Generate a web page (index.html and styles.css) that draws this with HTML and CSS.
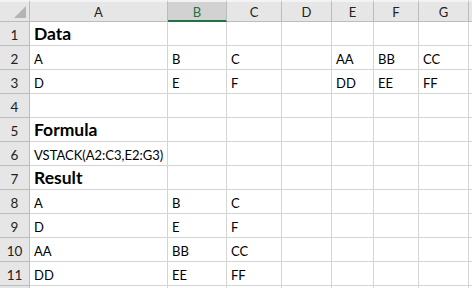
FILE: index.html
```html
<!DOCTYPE html>
<html>
<head>
<meta charset="utf-8">
<link rel="stylesheet" href="styles.css">
</head>
<body>
<div class="sheet">
  <div class="ch corner"><span class="tri"></span></div>
  <div class="ch">A</div>
  <div class="ch sel">B</div>
  <div class="ch">C</div>
  <div class="ch">D</div>
  <div class="ch">E</div>
  <div class="ch">F</div>
  <div class="ch">G</div>
  <div class="ch end"></div>

  <div class="rh">1</div><div class="c title">Data</div><div class="c"></div><div class="c"></div><div class="c"></div><div class="c"></div><div class="c"></div><div class="c"></div><div class="c"></div>
  <div class="rh">2</div><div class="c">A</div><div class="c">B</div><div class="c">C</div><div class="c"></div><div class="c">AA</div><div class="c">BB</div><div class="c">CC</div><div class="c"></div>
  <div class="rh">3</div><div class="c">D</div><div class="c">E</div><div class="c">F</div><div class="c"></div><div class="c">DD</div><div class="c">EE</div><div class="c">FF</div><div class="c"></div>
  <div class="rh">4</div><div class="c"></div><div class="c"></div><div class="c"></div><div class="c"></div><div class="c"></div><div class="c"></div><div class="c"></div><div class="c"></div>
  <div class="rh">5</div><div class="c title">Formula</div><div class="c"></div><div class="c"></div><div class="c"></div><div class="c"></div><div class="c"></div><div class="c"></div><div class="c"></div>
  <div class="rh">6</div><div class="c">VSTACK(A2:C3,E2:G3)</div><div class="c"></div><div class="c"></div><div class="c"></div><div class="c"></div><div class="c"></div><div class="c"></div><div class="c"></div>
  <div class="rh">7</div><div class="c title">Result</div><div class="c"></div><div class="c"></div><div class="c"></div><div class="c"></div><div class="c"></div><div class="c"></div><div class="c"></div>
  <div class="rh">8</div><div class="c">A</div><div class="c">B</div><div class="c">C</div><div class="c"></div><div class="c"></div><div class="c"></div><div class="c"></div><div class="c"></div>
  <div class="rh">9</div><div class="c">D</div><div class="c">E</div><div class="c">F</div><div class="c"></div><div class="c"></div><div class="c"></div><div class="c"></div><div class="c"></div>
  <div class="rh">10</div><div class="c">AA</div><div class="c">BB</div><div class="c">CC</div><div class="c"></div><div class="c"></div><div class="c"></div><div class="c"></div><div class="c"></div>
  <div class="rh">11</div><div class="c">DD</div><div class="c">EE</div><div class="c">FF</div><div class="c"></div><div class="c"></div><div class="c"></div><div class="c"></div><div class="c"></div>
  <div class="rh"></div><div class="c"></div><div class="c"></div><div class="c"></div><div class="c"></div><div class="c"></div><div class="c"></div><div class="c"></div><div class="c"></div>
</div>
</body>
</html>
```
FILE: styles.css
```css
html, body {
  margin: 0;
  padding: 0;
  background: #ffffff;
  overflow: hidden;
}
.sheet {
  display: grid;
  grid-template-columns: 30px 138px 59px 55px 50px 42px 45px 50px 1fr;
  grid-template-rows: 22px repeat(12, 24px);
  font-family: "Lato", "Open Sans", sans-serif;
  font-size: 13px;
  color: #000;
  width: 472px;
  height: 288px;
  overflow: hidden;
}
.ch {
  background: #e6e6e6;
  border-right: 1px solid #bcbcbc;
  border-bottom: 1px solid #bcbcbc;
  border-top: 2px solid #f3f3f3;
  color: #222;
  display: flex;
  align-items: center;
  justify-content: center;
  padding-top: 1px;
  box-sizing: border-box;
  font-size: 13px;
}
.ch.sel {
  background: #d2d2d2;
  color: #217346;
  border-bottom: 2px solid #217346;
}
.ch.end {
  border-right: none;
}
.corner {
  position: relative;
}
.tri {
  position: absolute;
  right: 3px;
  bottom: 3px;
  width: 0;
  height: 0;
  border-left: 12px solid transparent;
  border-bottom: 12px solid #b4b4b4;
}
.rh {
  background: #e6e6e6;
  border-right: 1px solid #bcbcbc;
  border-bottom: 1px solid #bcbcbc;
  color: #222;
  display: flex;
  align-items: flex-end;
  justify-content: center;
  padding-bottom: 2px;
  box-sizing: border-box;
  font-size: 13.5px;
}
.c {
  border-right: 1px solid #d4d4d4;
  border-bottom: 1px solid #d4d4d4;
  box-sizing: border-box;
  display: flex;
  align-items: flex-end;
  padding: 0 0 2px 4px;
  white-space: nowrap;
  overflow: visible;
}
.c.title {
  font-weight: bold;
  font-size: 17.5px;
  padding-bottom: 1px;
}
```
